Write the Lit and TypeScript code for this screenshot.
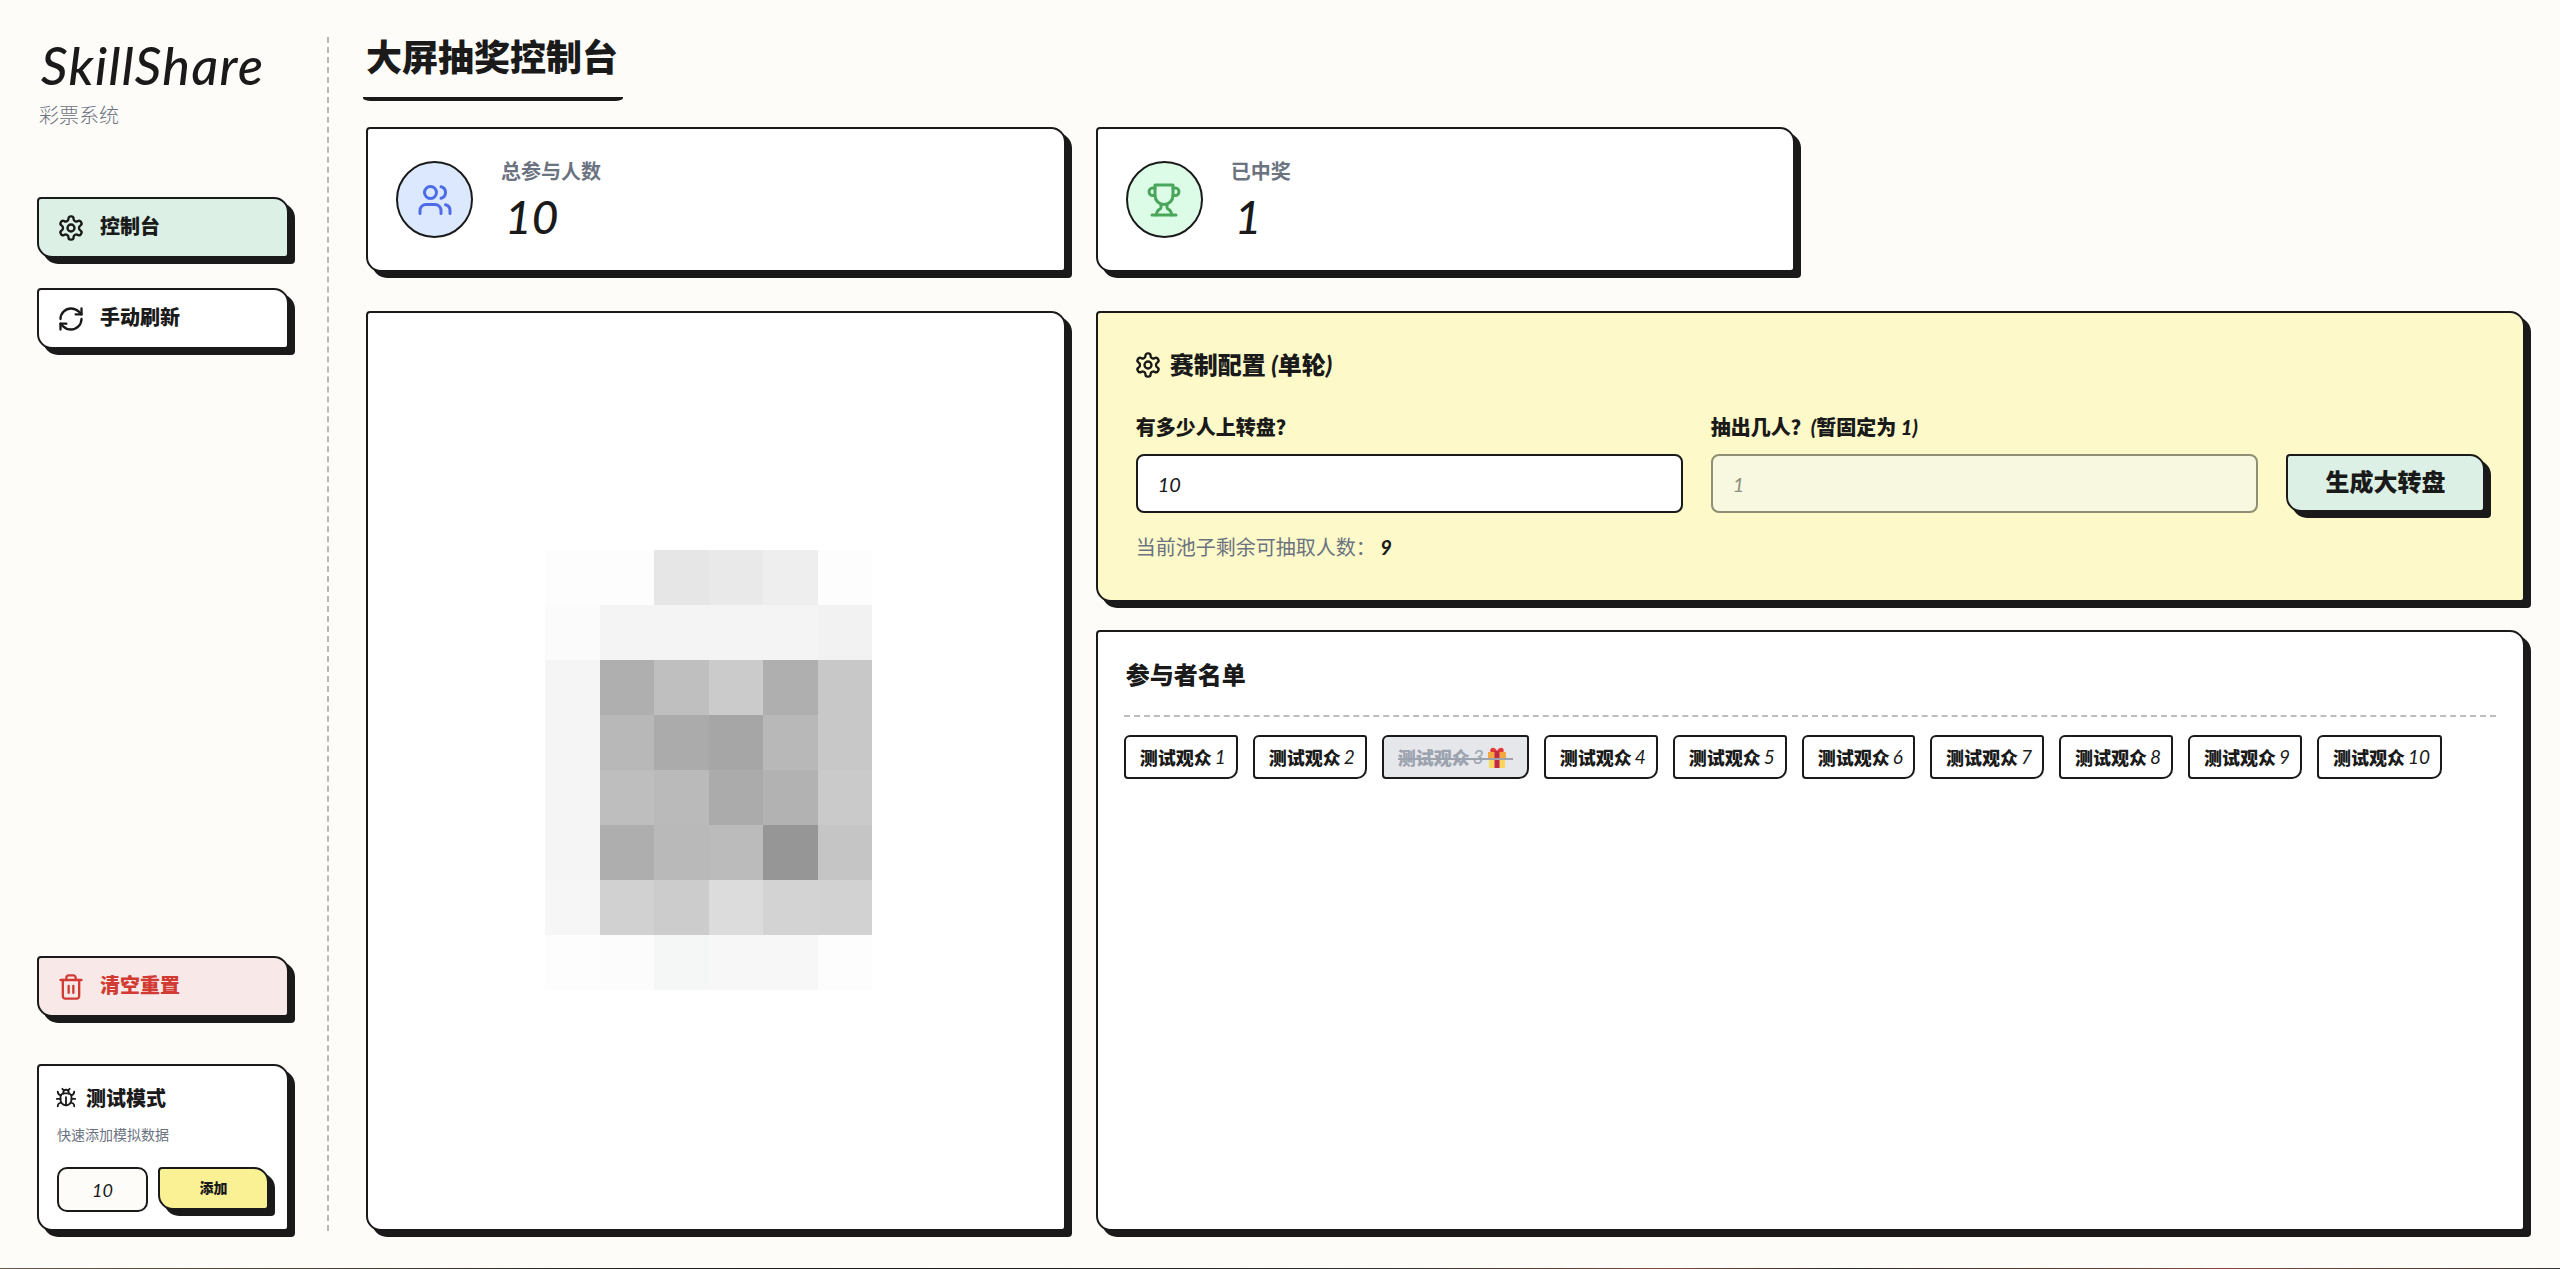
import { LitElement, html, css, svg } from "lit";
import { customElement } from "lit/decorators.js";

const icon = (body: unknown, cls = "") =>
  html`<svg class="ic ${cls}" viewBox="0 0 24 24" fill="none" stroke="currentColor" stroke-width="2" stroke-linecap="round" stroke-linejoin="round">${body}</svg>`;

const gear = svg`<path d="M12.22 2h-.44a2 2 0 0 0-2 2v.18a2 2 0 0 1-1 1.73l-.43.25a2 2 0 0 1-2 0l-.15-.08a2 2 0 0 0-2.73.73l-.22.38a2 2 0 0 0 .73 2.73l.15.1a2 2 0 0 1 1 1.72v.51a2 2 0 0 1-1 1.74l-.15.09a2 2 0 0 0-.73 2.73l.22.38a2 2 0 0 0 2.73.73l.15-.08a2 2 0 0 1 2 0l.43.25a2 2 0 0 1 1 1.73V20a2 2 0 0 0 2 2h.44a2 2 0 0 0 2-2v-.18a2 2 0 0 1 1-1.73l.43-.25a2 2 0 0 1 2 0l.15.08a2 2 0 0 0 2.73-.73l.22-.39a2 2 0 0 0-.73-2.73l-.15-.08a2 2 0 0 1-1-1.74v-.5a2 2 0 0 1 1-1.74l.15-.09a2 2 0 0 0 .73-2.73l-.22-.38a2 2 0 0 0-2.73-.73l-.15.08a2 2 0 0 1-2 0l-.43-.25a2 2 0 0 1-1-1.73V4a2 2 0 0 0-2-2z"/><circle cx="12" cy="12" r="3"/>`;
const refresh = svg`<path d="M3 12a9 9 0 0 1 9-9 9.75 9.75 0 0 1 6.74 2.74L21 8"/><path d="M21 3v5h-5"/><path d="M21 12a9 9 0 0 1-9 9 9.75 9.75 0 0 1-6.74-2.74L3 16"/><path d="M8 16H3v5"/>`;
const trash = svg`<path d="M3 6h18"/><path d="M19 6v14c0 1-1 2-2 2H7c-1 0-2-1-2-2V6"/><path d="M8 6V4c0-1 1-2 2-2h4c1 0 2 1 2 2v2"/><line x1="10" x2="10" y1="11" y2="17"/><line x1="14" x2="14" y1="11" y2="17"/>`;
const bug = svg`<path d="m8 2 1.88 1.88"/><path d="M14.12 3.88 16 2"/><path d="M9 7.13v-1a3.003 3.003 0 1 1 6 0v1"/><path d="M12 20c-3.3 0-6-2.7-6-6v-3a4 4 0 0 1 4-4h4a4 4 0 0 1 4 4v3c0 3.3-2.7 6-6 6"/><path d="M12 20v-9"/><path d="M6.53 9C4.6 8.8 3 7.1 3 5"/><path d="M6 13H2"/><path d="M3 21c0-2.1 1.7-3.9 3.8-4"/><path d="M20.97 5c0 2.1-1.6 3.8-3.5 4"/><path d="M22 13h-4"/><path d="M17.2 17c2.1.1 3.8 1.9 3.8 4"/>`;
const users = svg`<path d="M16 21v-2a4 4 0 0 0-4-4H6a4 4 0 0 0-4 4v2"/><circle cx="9" cy="7" r="4"/><path d="M22 21v-2a4 4 0 0 0-3-3.87"/><path d="M16 3.13a4 4 0 0 1 0 7.75"/>`;
const trophy = svg`<path d="M6 9H4.5a2.5 2.5 0 0 1 0-5H6"/><path d="M18 9h1.5a2.5 2.5 0 0 0 0-5H18"/><path d="M4 22h16"/><path d="M10 14.66V17c0 .55-.47.98-.97 1.21C7.85 18.75 7 20.24 7 22"/><path d="M14 14.66V17c0 .55.47.98.97 1.21C16.15 18.75 17 20.24 17 22"/><path d="M18 2H6v7a6 6 0 0 0 12 0V2Z"/>`;

const _ = "#fdfdfd";
const PIXELS: string[][] = [
  [_, _, "#e6e6e6", "#e9e9e9", "#eeeeee", _],
  ["#fbfbfb", "#f4f4f4", "#f4f4f4", "#f4f4f4", "#f4f4f4", "#f2f2f2"],
  ["#f5f5f5", "#afafaf", "#bfbfbf", "#cbcbcb", "#afafaf", "#c8c8c8"],
  ["#f5f5f5", "#b8b8b8", "#ababab", "#a6a6a6", "#b8b8b8", "#c8c8c8"],
  ["#f5f5f5", "#bebebe", "#bababa", "#ababab", "#b2b2b2", "#cacaca"],
  ["#f5f5f5", "#aeaeae", "#b9b9b9", "#bbbbbb", "#969696", "#c5c5c5"],
  ["#f6f6f6", "#d1d1d1", "#cccccc", "#dcdcdc", "#d3d3d3", "#d2d2d2"],
  [_, "#fcfcfc", "#f5f6f6", "#f7f7f7", "#f7f7f7", _],
];

const PEOPLE = [1, 2, 3, 4, 5, 6, 7, 8, 9, 10];

@customElement("app-root")
export class AppRoot extends LitElement {
  static styles = css`
    :host {
      display: block;
      --ink: #1a1a1a;
      --muted: #6b7280;
      --cjk: "Noto Sans CJK SC", sans-serif;
      --latin: "Lato", "Noto Sans CJK SC", sans-serif;
      font-family: var(--cjk);
      color: var(--ink);
      background: #fdfcf8;
    }
    * { box-sizing: border-box; }
    .page {
      height: 1268px;
      display: flex;
      padding: 37px 35px 37px 37px;
    }
    .rule {
      height: 1px;
      background: linear-gradient(90deg, #6b5a4a 0%, #4a4338 12%, #222 25%, #1a1a1a 35%, #333 55%, #8a4a3a 65%, #2a2a2a 72%, #8a4a3a 87%, #333 100%);
    }
    .ic { display: block; flex: none; width: 28px; height: 28px; }
    .lat { font-family: var(--latin); font-style: italic; }

    .side {
      width: 292px;
      flex: none;
      padding-right: 38px;
      border-right: 2px dashed #b9b9b4;
      display: flex;
      flex-direction: column;
      margin-right: 37px;
    }
    .logo {
      font: italic 500 52px/50px "Lato", sans-serif;
      margin: 3px 0 0 4px;
      letter-spacing: 1.4px;
      white-space: nowrap;
    }
    .tag {
      font-size: 20px;
      line-height: 24px;
      font-weight: 300;
      color: var(--muted);
      margin: 13px 0 0 2px;
    }
    .box {
      border: 2px solid var(--ink);
      box-shadow: 6px 6px 0 var(--ink);
      border-radius: 4px 15px 4px 15px;
      background: #fff;
    }
    .nav {
      height: 61px;
      display: flex;
      align-items: center;
      gap: 15px;
      padding: 0 18px;
      font-size: 20px;
      font-weight: 900;
      line-height: 24px;
    }
    .nav span { position: relative; top: -2px; }
    .nav.active { background: #dcf0e6; margin-top: 70px; }
    .nav.plain { margin-top: 30px; }
    .nav.danger {
      margin-top: auto;
      background: #f9e8e8;
      color: #d13b34;
    }
    .debug {
      height: 167px;
      margin-top: 47px;
      padding: 19px 18px 0;
    }
    .debug-head {
      display: flex;
      align-items: center;
      gap: 9px;
      font-size: 20px;
      line-height: 26px;
      font-weight: 900;
    }
    .debug-head .ic { width: 22px; height: 22px; margin-left: -2px; }
    .debug p {
      margin: 14px 0 0;
      font-size: 14px;
      line-height: 18px;
      font-weight: 400;
      color: var(--muted);
    }
    .debug-row { display: flex; gap: 10px; margin-top: 24px; }
    .debug-row input {
      width: 91px;
      height: 45px;
      border: 2px solid var(--ink);
      border-radius: 10px;
      background: #fdfcf8;
      text-align: center;
      font: italic 400 18px "Lato", sans-serif;
      color: var(--ink);
      padding: 0;
      outline: none;
    }
    .add {
      width: 111px;
      height: 43px;
      padding: 0 0 4px;
      background: #f9f194;
      border: 2px solid var(--ink);
      box-shadow: 6px 6px 0 var(--ink);
      border-radius: 4px 15px 4px 15px;
      font: 900 14px/1 var(--cjk);
      color: var(--ink);
    }

    .main { flex: 1; min-width: 0; display: flex; flex-direction: column; }
    .title-wrap { height: 64px; display: flex; }
    h1 {
      margin: 0 0 0 -3px;
      height: 64px;
      padding: 0 5px 0 3px;
      font-size: 36px;
      line-height: 36px;
      font-weight: 900;
      border-bottom: 4px solid var(--ink);
      border-radius: 0 0 8px 8px / 0 0 3px 3px;
    }
    .stats {
      display: grid;
      grid-template-columns: repeat(3, 1fr);
      gap: 30px;
      margin-top: 26px;
    }
    .stat {
      height: 145px;
      display: flex;
      align-items: center;
      gap: 28px;
      padding: 0 28px;
    }
    .circle {
      width: 77px;
      height: 77px;
      flex: none;
      border: 2px solid var(--ink);
      border-radius: 50%;
      display: flex;
      align-items: center;
      justify-content: center;
    }
    .circle .ic { width: 36px; height: 36px; }
    .c-blue { background: #dbe8fe; color: #4f6ce8; }
    .c-green { background: #dcfce7; color: #4aa65a; }
    .stat-label {
      font-size: 20px;
      line-height: 24px;
      font-weight: 700;
      color: var(--muted);
    }
    .stat-value {
      font: italic 500 46px/48px "Lato", sans-serif;
      margin: 10px 0 0 4px;
    }
    .lower {
      flex: 1;
      min-height: 0;
      display: grid;
      grid-template-columns: repeat(3, 1fr);
      gap: 30px;
      margin-top: 39px;
    }
    .pic {
      display: flex;
      align-items: center;
      padding: 0 0 2px 177px;
    }
    .pixels {
      display: grid;
      grid-template-columns: repeat(6, 54.5px);
      grid-auto-rows: 55px;
      filter: blur(0.4px);
    }
    .right {
      grid-column: span 2;
      display: flex;
      flex-direction: column;
      gap: 28px;
      min-height: 0;
    }
    .config {
      height: 291px;
      flex: none;
      background: #fdf9c8;
      padding: 35px 38px 0;
    }
    .config-head {
      display: flex;
      align-items: center;
      gap: 8px;
      margin-left: -2px;
      font-size: 24px;
      line-height: 32px;
      font-weight: 900;
    }
    .form {
      display: flex;
      align-items: flex-start;
      gap: 28px;
      margin-top: 33px;
    }
    .field { flex: 1; min-width: 0; }
    .field label {
      display: block;
      font-size: 20px;
      line-height: 26px;
      font-weight: 900;
      white-space: nowrap;
    }
    .field input {
      display: block;
      width: 100%;
      height: 59px;
      margin-top: 14px;
      padding: 0 20px;
      border: 2px solid var(--ink);
      border-radius: 8px;
      background: #fff;
      font: italic 400 20px "Lato", sans-serif;
      color: var(--ink);
      outline: none;
    }
    .field input:disabled {
      background: #f8f8e0;
      border-color: #8f8f73;
      color: #8f8f80;
    }
    .gen {
      width: 199px;
      height: 58px;
      flex: none;
      align-self: flex-end;
      margin: 0 0 1px 0;
      padding: 0 0 4px;
      background: #dcf0e6;
      border: 2px solid var(--ink);
      box-shadow: 6px 6px 0 var(--ink);
      border-radius: 4px 15px 4px 15px;
      font: 900 24px/1 var(--cjk);
      color: var(--ink);
    }
    .hint {
      margin: 21px 0 0;
      font-size: 20px;
      line-height: 26px;
      font-weight: 400;
      color: var(--muted);
    }
    .hint b { color: var(--ink); font: italic 700 20px "Lato", sans-serif; }
    .list { flex: 1; min-height: 0; padding: 26px 27px 0 26px; }
    h2 {
      margin: 0;
      font-size: 24px;
      line-height: 32px;
      font-weight: 900;
      padding: 0 2px 25px;
      border-bottom: 2px dashed #bdbdbd;
    }
    .chips { display: flex; flex-wrap: wrap; gap: 15px; margin-top: 18px; }
    .chip {
      position: relative;
      height: 44px;
      padding: 0 10px 0 14px;
      display: flex;
      align-items: center;
      border: 2px solid var(--ink);
      border-radius: 6px 3px 10px 4px;
      font-size: 18px;
      font-weight: 900;
      line-height: 24px;
      white-space: nowrap;
    }
    .chip .lat { font-weight: 400; font-size: 19px; margin-left: 3px; min-width: 10px; }
    .chip.won { background: #e5e7eb; color: #9ca3af; }
    .chip.won::after {
      content: "";
      position: absolute;
      left: 14px;
      right: 14px;
      top: 21px;
      height: 2px;
      background: #9ca3af;
    }
    .gift { width: 20px; height: 21px; flex: none; margin: 0 10px 0 3px; display: block; }
  `;

  render() {
    return html`
      <div class="page">
        <aside class="side">
          <div class="logo">SkillShare</div>
          <div class="tag">彩票系统</div>
          <div class="box nav active">${icon(gear)}<span>控制台</span></div>
          <div class="box nav plain">${icon(refresh)}<span>手动刷新</span></div>
          <div class="box nav danger">${icon(trash)}<span>清空重置</span></div>
          <div class="box debug">
            <div class="debug-head">${icon(bug)}<span>测试模式</span></div>
            <p>快速添加模拟数据</p>
            <div class="debug-row">
              <input type="text" .value=${"10"} />
              <button class="add">添加</button>
            </div>
          </div>
        </aside>
        <main class="main">
          <div class="title-wrap"><h1>大屏抽奖控制台</h1></div>
          <section class="stats">
            <div class="box stat">
              <div class="circle c-blue">${icon(users)}</div>
              <div>
                <div class="stat-label">总参与人数</div>
                <div class="stat-value">10</div>
              </div>
            </div>
            <div class="box stat">
              <div class="circle c-green">${icon(trophy)}</div>
              <div>
                <div class="stat-label">已中奖</div>
                <div class="stat-value">1</div>
              </div>
            </div>
          </section>
          <section class="lower">
            <div class="box pic">
              <div class="pixels">
                ${PIXELS.flat().map((c) => html`<div style="background:${c}"></div>`)}
              </div>
            </div>
            <div class="right">
              <div class="box config">
                <div class="config-head">${icon(gear)}<span>赛制配置 <span class="lat">(</span>单轮<span class="lat">)</span></span></div>
                <div class="form">
                  <div class="field">
                    <label>有多少人上转盘？</label>
                    <input type="text" .value=${"10"} />
                  </div>
                  <div class="field">
                    <label>抽出几人？<span class="lat">(</span>暂固定为 <span class="lat">1)</span></label>
                    <input type="text" disabled .value=${"1"} />
                  </div>
                  <button class="gen">生成大转盘</button>
                </div>
                <p class="hint">当前池子剩余可抽取人数： <b>9</b></p>
              </div>
              <div class="box list">
                <h2>参与者名单</h2>
                <div class="chips">
                  ${PEOPLE.map((n) =>
                    n === 3
                      ? html`<div class="chip won">测试观众<span class="lat">${n}</span>
                          <svg class="gift" viewBox="0 0 20 21">
                            <path d="M4 1.5c1.6-1.4 4.6-.6 6 2.5 1.4-3.1 4.4-3.9 6-2.5 1.6 1.6.6 4.5-1.5 4.5h-9C3.400 6 2.400 3.100 4 1.500z" fill="#e53935"/>
                            <rect x="1" y="5" width="18" height="6" fill="#f3a83f"/>
                            <rect x="2" y="11" width="16" height="10" fill="#f8d75b"/>
                            <rect x="7.500" y="4" width="5" height="17" fill="#c2284a"/>
                          </svg></div>`
                      : html`<div class="chip">测试观众<span class="lat">${n}</span></div>`
                  )}
                </div>
              </div>
            </div>
          </section>
        </main>
      </div>
      <div class="rule"></div>
    `;
  }
}
